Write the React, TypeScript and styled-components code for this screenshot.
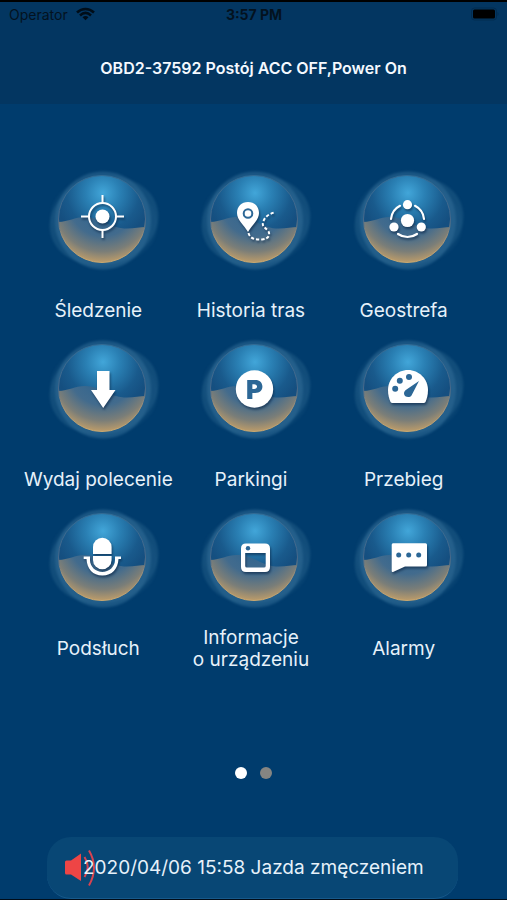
import React, { useId, useState } from "react";
import styled, { createGlobalStyle } from "styled-components";

const GlobalStyle = createGlobalStyle`
  * { box-sizing: border-box; }
  body {
    margin: 0;
    background: #003c6d;
    font-family: Inter, Roboto, "Liberation Sans", sans-serif;
  }
  button { font: inherit; color: inherit; background: none; border: 0; padding: 0; cursor: pointer; }
`;

const Screen = styled.div`
  display: flex;
  flex-direction: column;
  min-height: 100vh;
  background: #003c6d;
  color: #e6f1fa;
  border-top: 2px solid #000;
  border-bottom: 1px solid #000c18;
`;

const Top = styled.header`
  background: #033661;
`;

const StatusBar = styled.div`
  display: grid;
  grid-template-columns: 1fr auto 1fr;
  align-items: center;
  height: 24px;
  padding: 0 8px 0 9px;
  color: #03121f;
  font-size: 14px;
`;

const Carrier = styled.span`
  display: flex;
  align-items: center;
  gap: 8px;
`;

const Clock = styled.time`
  font-weight: 700;
`;

const BatterySlot = styled.span`
  display: flex;
  justify-content: flex-end;
`;

const Title = styled.h1`
  margin: 0;
  padding: 32px 16px 26px;
  font-size: 16px;
  line-height: 20px;
  font-weight: 600;
  text-align: center;
  color: #f4f9ff;
`;

const Menu = styled.main`
  display: grid;
  grid-template-columns: repeat(3, 1fr);
  row-gap: 4px;
  padding: 64px 27px 0 22px;
`;

const MenuButton = styled.button`
  display: flex;
  flex-direction: column;
  align-items: center;
  gap: 17px;
`;

const Orb = styled.svg`
  width: 110px;
  height: 104px;
  margin-left: 11px;
  overflow: visible;
`;

const Glyph = styled.g`
  filter: drop-shadow(1px 2px 1px rgba(10, 35, 65, 0.6));
`;

const Halo = styled.g`
  filter: blur(1px);
`;

const ParkingLetter = styled.text`
  font-family: Inter, sans-serif;
  font-size: 26px;
  font-weight: 900;
`;

const Label = styled.span`
  display: flex;
  align-items: center;
  height: 44px;
  font-size: 19px;
  line-height: 22px;
  white-space: pre;
`;

const Pager = styled.nav`
  display: flex;
  justify-content: center;
  gap: 13px;
  padding: 96px 0 56px;
`;

const Dot = styled.button<{ $active: boolean }>`
  width: 12px;
  height: 12px;
  border-radius: 50%;
  background: ${(p) => (p.$active ? "#ffffff" : "#858582")};
`;

const Notice = styled.footer`
  display: flex;
  align-items: center;
  height: 62px;
  margin: auto 49px 0 47px;
  padding-left: 17px;
  border-radius: 24px;
  background: #084775;
  border-bottom: 1px solid #17598a;
  font-size: 19px;
`;

const Speaker = styled.svg`
  flex: none;
  width: 34px;
  height: 38px;
  margin-right: -15px;
`;

const NoticeText = styled.span`
  position: relative;
  white-space: nowrap;
`;

const HOLE = "#2c6796";
const WATER = "M8 54C20 54 25 49 36 49C52 49 61 60 75 60.500C84 61 91 59 98 59V98H8z";

const icons = {
  target: (
    <g fill="none" stroke="#fff" strokeWidth="2">
      <circle cx="53.5" cy="48.5" r="13.5" />
      <circle cx="53.5" cy="48.5" r="7" fill="#fff" stroke="none" />
      <path d="M53.5 27v8M53.5 62v8M32 48.5h8M67 48.5h8" />
    </g>
  ),
  route: (
    <g>
      <path fill="#fff" d="M47 34C40.500 34 36 38.500 36 45c0 7 7 12 11 19 4-7 11-12 11-19 0-6.500-4.500-11-11-11z" />
      <circle cx="47" cy="45.500" r="4.300" fill="#fff" stroke={HOLE} strokeWidth="2" />
      <path
        d="M47.500 65C49 71 55 72 61 71.500C68 71 70 66 66.500 62C63 59 60.500 58 62.500 53C64 49 67 46.500 73 44.500"
        fill="none" stroke="#fff" strokeWidth="2" strokeDasharray="3.200 2"
      />
    </g>
  ),
  fence: (
    <g fill="#fff">
      <circle cx="53.500" cy="52.500" r="6.600" />
      <circle cx="53.500" cy="36.700" r="4.600" />
      <circle cx="40" cy="59" r="4.600" />
      <circle cx="67.300" cy="59" r="4.600" />
      <path
        d="M37 51A16.600 16.600 0 0 1 46 37.800M61 37.800A16.600 16.600 0 0 1 70 51M44 66A16.600 16.600 0 0 0 63 66"
        fill="none" stroke="#fff" strokeWidth="2.200" strokeLinecap="round"
      />
    </g>
  ),
  arrow: <path fill="#fff" d="M48 34H60.500V53H66.500L54.200 71L42 53H48z" />,
  parking: (
    <g>
      <circle cx="53.500" cy="52" r="18.700" fill="#fff" />
      <ParkingLetter x="53.500" y="61.500" textAnchor="middle" fill={HOLE}>P</ParkingLetter>
    </g>
  ),
  gauge: (
    <g>
      <path fill="#fff" d="M38.500 66Q37 66 36.500 65C35 61 34 58 34 53C34 42 43 33 54 33S74 42 74 53C74 58 73 61 71.500 65Q71 66 69.500 66z" />
      <g fill={HOLE}>
        <circle cx="41.200" cy="51.700" r="3" />
        <circle cx="45.800" cy="43.700" r="3" />
        <circle cx="55" cy="40" r="3" />
        <path d="M65 44L57.500 58.500C55.500 61.500 50 60 50 56.500C50 54.500 51 53.500 52.500 52.500z" />
      </g>
    </g>
  ),
  mic: (
    <g fill="#fff">
      <path d="M44 48V41A9.300 9.300 0 0 1 62.600 41V48z" />
      <path d="M44 50H62.600V54A9.300 9.300 0 0 1 44 54z" />
      <path d="M34.700 50.500H41V54C41 61 47 66 53.400 66S66 61 66 54V50.500H72V53H69.500C69 63 63 69.500 53.400 69.500S38 63 37.500 53H34.700z" />
    </g>
  ),
  device: (
    <g>
      <path
        fill="#fff" fillRule="evenodd"
        d="M45 37.500H64Q69 37.500 69 42.500V61Q69 66 64 66H45Q40 66 40 61V42.500Q40 37.500 45 37.500zM44.200 47V60Q44.200 61.500 46 61.500H63Q64.700 61.500 64.700 60V47z"
      />
      <circle cx="47" cy="42.300" r="2.200" fill={HOLE} />
    </g>
  ),
  chat: (
    <g>
      <path fill="#fff" d="M39 37.300H71.500Q73 37.300 73 38.800V59Q73 60.500 71.500 60.500H51L39 66Q37.700 66.400 37.700 65V38.800Q37.700 37.300 39 37.300z" />
      <g fill={HOLE}>
        <circle cx="44.700" cy="49" r="2.500" />
        <circle cx="54.700" cy="49" r="2.500" />
        <circle cx="64.700" cy="49" r="2.500" />
      </g>
    </g>
  ),
};

type IconName = keyof typeof icons;

const items: { icon: IconName; label: string }[] = [
  { icon: "target", label: "Śledzenie" },
  { icon: "route", label: "Historia tras" },
  { icon: "fence", label: "Geostrefa" },
  { icon: "arrow", label: "Wydaj polecenie" },
  { icon: "parking", label: "Parkingi" },
  { icon: "gauge", label: "Przebieg" },
  { icon: "mic", label: "Podsłuch" },
  { icon: "device", label: "Informacje\no urządzeniu" },
  { icon: "chat", label: "Alarmy" },
];

function OrbIcon({ icon }: { icon: IconName }) {
  const id = useId().replace(/[^a-zA-Z0-9]/g, "");
  return (
    <Orb viewBox="0 0 110 104" aria-hidden="true">
      <defs>
        <radialGradient id={`${id}sky`} gradientUnits="userSpaceOnUse" cx="54" cy="25" r="48">
          <stop offset="0" stopColor="#42a6d9" />
          <stop offset="0.35" stopColor="#2a80b4" />
          <stop offset="0.75" stopColor="#195a8c" />
          <stop offset="1" stopColor="#154f80" />
        </radialGradient>
        <radialGradient id={`${id}sea`} gradientUnits="userSpaceOnUse" cx="54" cy="34" r="62">
          <stop offset="0.25" stopColor="#33668f" />
          <stop offset="0.55" stopColor="#426b8d" />
          <stop offset="0.8" stopColor="#7b7e78" />
          <stop offset="1" stopColor="#c5a068" />
        </radialGradient>
        <linearGradient id={`${id}rim`} x1="0" y1="0" x2="0" y2="1">
          <stop offset="0" stopColor="#336b94" />
          <stop offset="0.5" stopColor="#47688a" />
          <stop offset="0.7" stopColor="#a0917a" />
          <stop offset="1" stopColor="#c9a870" />
        </linearGradient>
        <clipPath id={`${id}clip`}>
          <circle cx="53" cy="51" r="43.500" />
        </clipPath>
      </defs>
      <Halo>
        <ellipse cx="55" cy="53" rx="55" ry="44" fill="#2b668f" opacity="0.4" transform="rotate(-14 55 53)" />
        <ellipse cx="55" cy="53" rx="54" ry="42" fill="#2b668f" opacity="0.15" transform="rotate(12 55 53)" />
        <ellipse cx="54" cy="52.500" rx="48" ry="49" fill="#34709a" opacity="0.5" />
      </Halo>
      <circle cx="53" cy="51" r="43.500" fill={`url(#${id}sky)`} />
      <path d={WATER} fill={`url(#${id}sea)`} clipPath={`url(#${id}clip)`} />
      <circle cx="53" cy="51" r="43.500" fill="none" stroke={`url(#${id}rim)`} strokeWidth="1" />
      <Glyph>{icons[icon]}</Glyph>
    </Orb>
  );
}

export default function App() {
  const [page, setPage] = useState(0);
  return (
    <>
      <GlobalStyle />
      <Screen>
        <Top>
          <StatusBar>
            <Carrier>
              Operator
              <svg width="19" height="14" viewBox="0 0 19 14" aria-hidden="true">
                <path
                  d="M1 5.500C6 0.700 13 0.700 18 5.500M4 8.500C7.500 5.200 11.500 5.200 15 8.500"
                  fill="none" stroke="#000d18" strokeWidth="2.500"
                />
                <path d="M6.500 10.300Q9.500 7.800 12.500 10.300L9.500 13.300z" fill="#000d18" />
              </svg>
            </Carrier>
            <Clock>3:57 PM</Clock>
            <BatterySlot>
              <svg width="28" height="14" viewBox="0 0 28 14" aria-hidden="true">
                <rect x="0.500" y="1" width="25" height="12" rx="3" fill="none" stroke="#022c50" />
                <rect x="2" y="2.500" width="22" height="9" rx="1.500" fill="#000" />
                <path d="M26.500 5Q28.500 7 26.500 9z" fill="#022c50" />
              </svg>
            </BatterySlot>
          </StatusBar>
          <Title>OBD2-37592 Postój ACC OFF,Power On</Title>
        </Top>
        <Menu>
          {items.map((item) => (
            <MenuButton key={item.icon} type="button">
              <OrbIcon icon={item.icon} />
              <Label>{item.label}</Label>
            </MenuButton>
          ))}
        </Menu>
        <Pager aria-label="Strony">
          {[0, 1].map((n) => (
            <Dot
              key={n}
              type="button"
              $active={page === n}
              aria-label={`Strona ${n + 1}`}
              onClick={() => setPage(n)}
            />
          ))}
        </Pager>
        <Notice>
          <Speaker viewBox="0 0 34 38" aria-hidden="true">
            <path d="M1 13Q1 11.500 2.500 11.500H7L17 4.500V32L7 25.500H2.500Q1 25.500 1 24z" fill="#ee4545" />
            <path d="M20.500 8Q27 18 20.500 28M25 1.500Q35 18.500 25 36.500" fill="none" stroke="#d84350" strokeWidth="2" />
          </Speaker>
          <NoticeText>2020/04/06 15:58 Jazda zmęczeniem</NoticeText>
        </Notice>
      </Screen>
    </>
  );
}
